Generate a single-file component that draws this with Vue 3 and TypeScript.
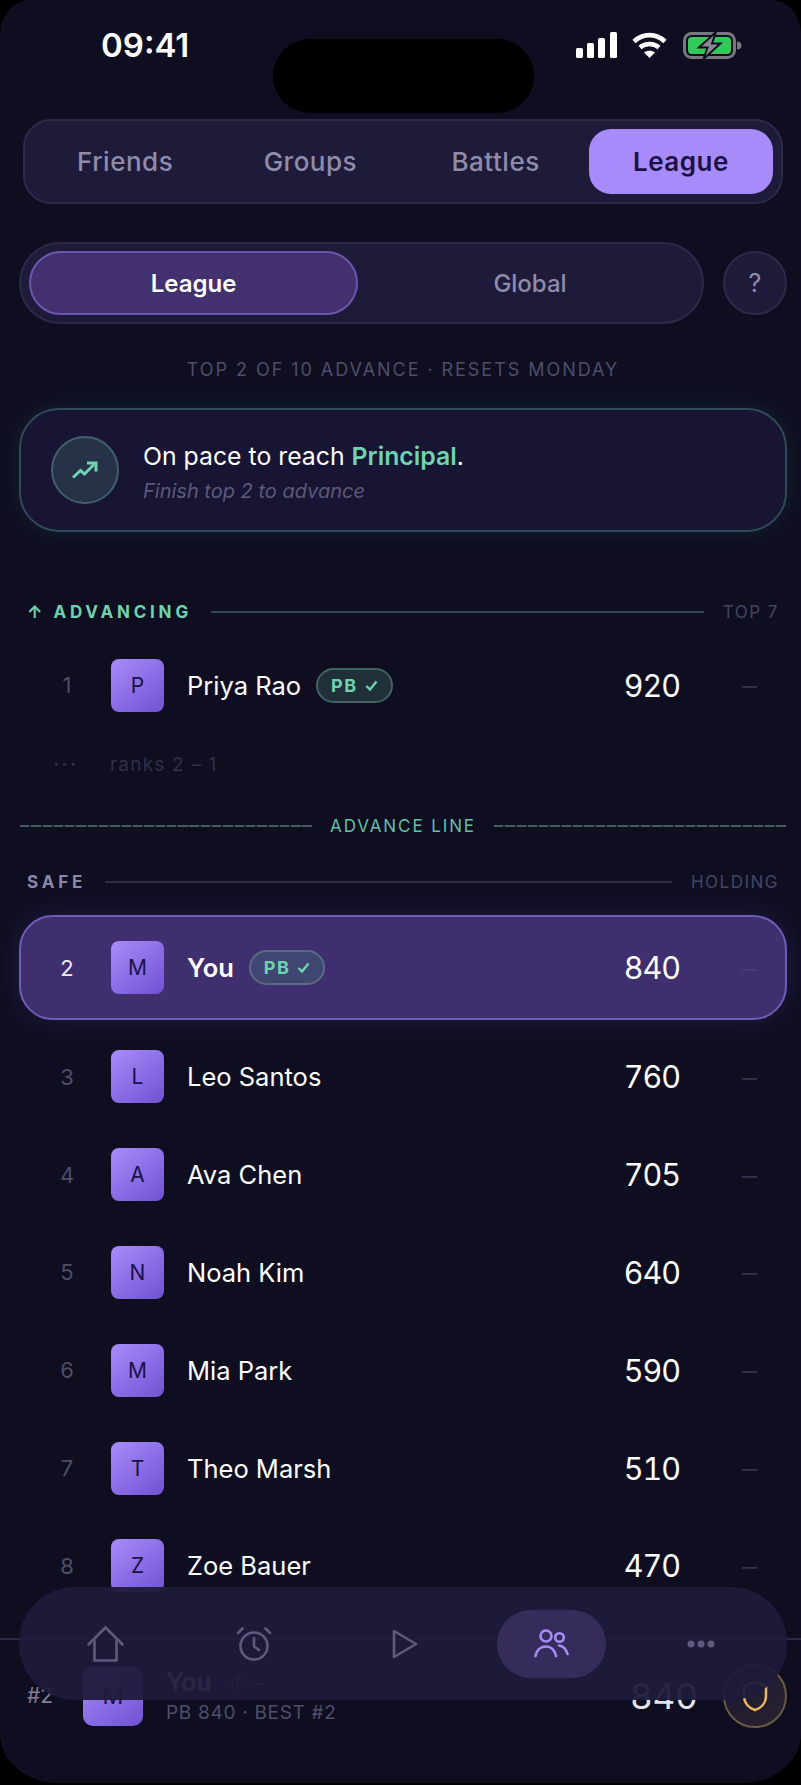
<template>
  <div class="phone">
    <div class="island"></div>

    <header class="status">
      <span class="time">09:41</span>
      <div class="status-icons">
        <svg width="41" height="26" viewBox="0 0 41 26" fill="#fff">
          <rect x="0" y="16" width="7" height="10" rx="1.5" />
          <rect x="11" y="11" width="7" height="15" rx="1.5" />
          <rect x="22" y="6" width="7" height="20" rx="1.5" />
          <rect x="34" y="0" width="7" height="26" rx="1.5" />
        </svg>
        <svg class="wifi" width="35" height="26" viewBox="0 0 35 26" fill="none" stroke="#fff" stroke-width="4.6">
          <path d="M2 9.5C11 1 24 1 33 9.5" />
          <path d="M8 15.6C13.5 10.8 21.5 10.8 27 15.6" />
          <path d="M17.5 26 L12 20.5 C15 18 20 18 23 20.5 Z" fill="#fff" stroke="none" />
        </svg>
        <svg class="battery" width="59" height="27" viewBox="0 0 59 27" fill="none">
          <rect x="1.5" y="1.5" width="50" height="24" rx="7" stroke="#77777f" stroke-width="3" />
          <rect x="5" y="5" width="43" height="17" rx="4" fill="#34c759" />
          <path d="M54 9.5c3 0 4.5 1.5 4.500 4s-1.500 4-4.500 4z" fill="#77777f" />
          <path d="M33 0 L16 15.500 H24.500 L20.500 27 L37.500 11.500 H29 Z" fill="#8a8a94" stroke="#0e0e20" stroke-width="2" />
        </svg>
      </div>
    </header>

    <nav class="tabs">
      <button v-for="t in tabs" :key="t" class="tab" :class="{ on: t === 'League' }">{{ t }}</button>
    </nav>

    <main class="content">
      <div class="seg-row">
        <div class="seg">
          <span class="seg-item on">League</span>
          <span class="seg-item global">Global</span>
        </div>
        <span class="help">?</span>
      </div>

      <p class="rule">TOP 2 OF 10 ADVANCE · RESETS MONDAY</p>

      <section class="pace">
        <span class="pace-icon">
          <svg width="26" height="18" viewBox="0 0 26 18" fill="none" stroke="#6fd3b0" stroke-width="3">
            <path d="M1 16.500 L8.500 9.500 L12.500 13 L22 3.500" />
            <path d="M15 2 H24 V10.500" />
          </svg>
        </span>
        <div>
          <div class="pace-title">On pace to reach <b>Principal</b>.</div>
          <div class="pace-sub">Finish top 2 to advance</div>
        </div>
      </section>

      <div class="section adv">
        <span class="section-name"><i>↑</i>ADVANCING</span>
        <span class="section-line"></span>
        <span class="section-note">TOP 7</span>
      </div>

      <div class="row first">
        <span class="rank">1</span>
        <span class="avatar">P</span>
        <span class="name">Priya Rao</span>
        <span class="pb">
          PB
          <svg width="13" height="11" viewBox="0 0 13 11" fill="none" stroke="#6fd3b0" stroke-width="2.400">
            <path d="M1.500 6 L5 9.500 L11.500 1.500" />
          </svg>
        </span>
        <span class="score">920</span>
        <span class="trend">–</span>
      </div>

      <div class="gap-row">
        <span class="gap-dots">···</span>
        <span class="gap-text">ranks 2 – 1</span>
      </div>

      <div class="advance-line">
        <span class="dash"></span>
        <span class="advance-text">ADVANCE LINE</span>
        <span class="dash"></span>
      </div>

      <div class="section safe">
        <span class="section-name">SAFE</span>
        <span class="section-line"></span>
        <span class="section-note">HOLDING</span>
      </div>

      <div class="row me">
        <span class="rank">2</span>
        <span class="avatar">M</span>
        <span class="name">You</span>
        <span class="pb">
          PB
          <svg width="13" height="11" viewBox="0 0 13 11" fill="none" stroke="#6fd3b0" stroke-width="2.400">
            <path d="M1.500 6 L5 9.500 L11.500 1.500" />
          </svg>
        </span>
        <span class="score">840</span>
        <span class="trend">–</span>
      </div>

      <div class="rows">
        <div v-for="r in rows" :key="r.rank" class="row">
          <span class="rank">{{ r.rank }}</span>
          <span class="avatar">{{ r.name[0] }}</span>
          <span class="name">{{ r.name }}</span>
          <span class="score">{{ r.score }}</span>
          <span class="trend">–</span>
        </div>
      </div>
    </main>

    <footer class="mine">
      <span class="mine-rank">#2</span>
      <span class="avatar big">M</span>
      <div class="mine-info">
        <div class="mine-name">You <i>↑ –</i></div>
        <div class="mine-sub">PB 840 · BEST #2</div>
      </div>
      <span class="mine-score">840</span>
      <span class="shield">
        <svg width="26" height="32" viewBox="0 0 26 32" fill="none" stroke="#e8b95c" stroke-width="2.500">
          <path d="M13 2 L24 6 V16 C24 23 19 28 13 30 C7 28 2 23 2 16 V6 Z" />
        </svg>
      </span>
    </footer>

    <nav class="dock">
      <span class="dock-item">
        <svg width="37" height="36" viewBox="0 0 37 36" fill="none" stroke="#5f5a7c" stroke-width="2.600" stroke-linejoin="round" stroke-linecap="round">
          <path d="M1.500 18.500 L18.500 1.500 L35.500 18.500" />
          <path d="M7.500 15 V34.500 H29.500 V15" />
        </svg>
      </span>
      <span class="dock-item">
        <svg width="36" height="34" viewBox="0 0 36 34" fill="none" stroke="#5f5a7c" stroke-width="2.600" stroke-linecap="round" stroke-linejoin="round">
          <circle cx="18" cy="19" r="13.500" />
          <path d="M18 11 V19.500 L23 23" />
          <path d="M2 6 L6.500 1.500" />
          <path d="M34 6 L29.500 1.500" />
        </svg>
      </span>
      <span class="dock-item play">
        <svg width="26" height="30" viewBox="0 0 26 30" fill="none" stroke="#5f5a7c" stroke-width="2.600" stroke-linejoin="round">
          <path d="M2 2 L24 15 L2 28 Z" />
        </svg>
      </span>
      <span class="dock-item on">
        <svg width="35" height="29" viewBox="0 0 35 29" fill="none" stroke="#a78bfa" stroke-width="2.600" stroke-linecap="round">
          <circle cx="12" cy="7" r="5.500" />
          <circle cx="25.500" cy="8.500" r="4.300" />
          <path d="M1.500 27 C3 20 8 17.500 12 17.500 C16 17.500 20.500 20 22 27" />
          <path d="M25 16.500 C29 17 32 20 33.500 25" />
        </svg>
      </span>
      <span class="dock-item">
        <svg width="28" height="8" viewBox="0 0 28 8" fill="#5f5a7c">
          <circle cx="4" cy="4" r="3.500" />
          <circle cx="14" cy="4" r="3.500" />
          <circle cx="24" cy="4" r="3.500" />
        </svg>
      </span>
    </nav>
  </div>
</template>

<script setup lang="ts">
const tabs = ['Friends', 'Groups', 'Battles', 'League']

const rows = [
  { rank: 3, name: 'Leo Santos', score: 760 },
  { rank: 4, name: 'Ava Chen', score: 705 },
  { rank: 5, name: 'Noah Kim', score: 640 },
  { rank: 6, name: 'Mia Park', score: 590 },
  { rank: 7, name: 'Theo Marsh', score: 510 },
  { rank: 8, name: 'Zoe Bauer', score: 470 },
]
</script>

<style>
html,
body {
  margin: 0;
  background: #000;
}
</style>

<style scoped>
.phone {
  position: relative;
  display: flex;
  flex-direction: column;
  width: 801px;
  height: 1783px;
  overflow: hidden;
  border-radius: 30px 30px 58px 58px / 34px 34px 50px 50px;
  background: #0e0e20;
  color: #fff;
  font-family: Inter, 'Liberation Sans', sans-serif;
}

.island {
  position: absolute;
  top: 39px;
  left: 273px;
  width: 261px;
  height: 74px;
  border-radius: 37px;
  background: #000;
}

.status {
  display: flex;
  justify-content: space-between;
  align-items: flex-start;
  height: 119px;
  flex: none;
  box-sizing: border-box;
  padding: 25px 59px 0 101px;
}

.time {
  font-size: 33px;
  font-weight: 600;
  line-height: 40px;
}

.status-icons {
  display: flex;
  align-items: flex-start;
  gap: 15px;
  padding-top: 7px;
}

.wifi {
  margin-right: 1px;
}

.tabs {
  display: grid;
  grid-template-columns: repeat(4, 1fr);
  gap: 1px;
  flex: none;
  height: 85px;
  box-sizing: border-box;
  margin: 0 18px 0 23px;
  padding: 8px;
  border: 2px solid #2c2949;
  border-radius: 28px;
  background: #1e1b3a;
}

.tab {
  border: 0;
  border-radius: 22px;
  background: none;
  color: #8f8cab;
  font: 500 26px Inter, 'Liberation Sans', sans-serif;
  letter-spacing: 0.5px;
}

.tab.on {
  background: #a78bfa;
  color: #1a1145;
  font-weight: 600;
}

.content {
  flex: 1;
  min-height: 0;
  padding: 0 14px 0 19px;
  overflow: hidden;
}

.seg-row {
  display: flex;
  align-items: center;
  gap: 19px;
  margin-top: 38px;
}

.seg {
  display: grid;
  grid-template-columns: 329px 1fr;
  width: 685px;
  height: 82px;
  box-sizing: border-box;
  padding: 7px 8px;
  border: 2px solid #2c2949;
  border-radius: 41px;
  background: #1e1b3a;
}

.seg-item {
  display: flex;
  align-items: center;
  justify-content: center;
  border-radius: 33px;
  color: #8f8cab;
  font-size: 24px;
  font-weight: 500;
}

.seg-item.global {
  padding-left: 8px;
}

.seg-item.on {
  border: 2px solid #6c55ae;
  background: #42306f;
  color: #fff;
  font-weight: 600;
}

.help {
  display: flex;
  align-items: center;
  justify-content: center;
  width: 64px;
  height: 64px;
  box-sizing: border-box;
  border: 2px solid #2c2949;
  border-radius: 50%;
  background: #1e1b3a;
  color: #8f8cab;
  font-size: 25px;
}

.rule {
  margin: 35px 0 0;
  color: #4f4d68;
  font-size: 18px;
  line-height: 22px;
  letter-spacing: 1.950px;
  text-align: center;
}

.pace {
  display: flex;
  align-items: center;
  gap: 24px;
  height: 124px;
  box-sizing: border-box;
  margin-top: 27px;
  padding-left: 30px;
  border: 2px solid #2e4a56;
  border-radius: 40px;
  background: #181433;
  box-shadow: 0 0 24px rgba(90, 200, 170, 0.1);
}

.pace-icon {
  display: flex;
  align-items: center;
  justify-content: center;
  width: 68px;
  height: 68px;
  box-sizing: border-box;
  border: 2px solid #40606a;
  border-radius: 50%;
  background: #263248;
}

.pace-title {
  padding-top: 4px;
  font-size: 24.8px;
  line-height: 32px;
}

.pace-title b {
  color: #6fd3b0;
  font-weight: 600;
}

.pace-sub {
  margin-top: 6px;
  color: #5c5a78;
  font-size: 20px;
  font-style: italic;
  line-height: 26px;
}

.section {
  display: flex;
  align-items: center;
  height: 22px;
  padding: 0 8px;
}

.section.adv {
  margin-top: 69px;
}

.section.safe {
  margin-top: 34px;
}

.section-name {
  color: #8a88a8;
  font-size: 17px;
  font-weight: 700;
  letter-spacing: 3.800px;
}

.adv .section-name {
  color: #6fd3b0;
}

.section-name i {
  margin-right: 11px;
  font-style: normal;
  letter-spacing: 0;
}

.section-line {
  flex: 1;
  height: 2px;
  margin: 0 19px 0 19px;
  background: #2e2d45;
}

.adv .section-line {
  background: #2f4a50;
}

.section-note {
  color: #454562;
  font-size: 17px;
  letter-spacing: 1.500px;
}

.row {
  display: flex;
  align-items: center;
  height: 98px;
  box-sizing: border-box;
  padding: 0 28px 0 16px;
  border: 2px solid transparent;
}

.rows .row {
  height: 97.8px;
}

.row.first {
  margin-top: 13px;
}

.rank {
  width: 60px;
  margin-right: 14px;
  color: #4f4d68;
  font-size: 22px;
  text-align: center;
}

.avatar {
  display: flex;
  align-items: center;
  justify-content: center;
  flex: none;
  width: 53px;
  height: 53px;
  border-radius: 8px;
  background: linear-gradient(140deg, #a88cfb, #7052d2);
  color: #1a1145;
  font-size: 21px;
}

.name {
  margin-left: 23px;
  font-size: 25.5px;
}

.pb {
  display: flex;
  align-items: center;
  gap: 7px;
  height: 35px;
  box-sizing: border-box;
  margin-left: 15px;
  padding: 0 13px;
  border: 2px solid #3f6465;
  border-radius: 18px;
  background: #1f3038;
  color: #6fd3b0;
  font-size: 18px;
  font-weight: 700;
  letter-spacing: 1.500px;
}

.score {
  margin-left: auto;
  font-size: 30.5px;
  font-variant-numeric: tabular-nums;
  letter-spacing: -1px;
}

.trend {
  width: 77px;
  color: #33324e;
  font-size: 30px;
  font-weight: 300;
  text-align: right;
}

.gap-row {
  display: flex;
  align-items: center;
  height: 24px;
  margin-top: 18px;
  color: #302f48;
  font-size: 19px;
  letter-spacing: 1.200px;
}

.gap-dots {
  width: 91px;
  padding-left: 34px;
  box-sizing: border-box;
  font-size: 22px;
  letter-spacing: 2px;
}

.advance-line {
  display: flex;
  align-items: center;
  gap: 18px;
  height: 22px;
  margin: 39px 1px 0;
}

.dash {
  flex: 1;
  height: 2px;
  background: repeating-linear-gradient(90deg, #465a62 0 9.3px, #1a2630 9.3px 11.3px);
}

.advance-text {
  color: #66bfa8;
  font-size: 17px;
  letter-spacing: 1.900px;
}

.row.me {
  height: 105px;
  margin-top: 22px;
  margin-bottom: 8px;
  border-color: #6f5bbb;
  border-radius: 34px;
  background: #3f2f6e;
  box-shadow: 0 0 28px rgba(130, 100, 230, 0.16);
}

.me .rank {
  color: #eceaf6;
}

.me .name {
  font-weight: 600;
}

.me .pb {
  border-color: #5c6b85;
  background: #3f4672;
}

.me .trend {
  color: #4a3a80;
}

.mine {
  display: flex;
  align-items: center;
  flex: none;
  height: 145px;
  box-sizing: border-box;
  padding: 0 14px 32px 27px;
  border-top: 2px solid #2d2a4a;
  background: #0f0e20;
}

.mine-rank {
  width: 56px;
  color: #807e98;
  font-size: 21px;
}

.avatar.big {
  width: 60px;
  height: 60px;
  border-radius: 10px;
  font-size: 23px;
}

.mine-info {
  margin-left: 23px;
}

.mine-name {
  font-size: 25px;
  font-weight: 600;
  line-height: 30px;
}

.mine-name i {
  margin-left: 10px;
  color: #6f6d88;
  font-size: 22px;
  font-style: normal;
  font-weight: 400;
}

.mine-sub {
  margin-top: 3px;
  color: #4f4d68;
  font-size: 19px;
  line-height: 24px;
  letter-spacing: 0.700px;
}

.mine-score {
  margin-left: auto;
  color: #e4e3ea;
  font-size: 35px;
  font-variant-numeric: tabular-nums;
}

.shield {
  display: flex;
  align-items: center;
  justify-content: center;
  width: 64px;
  height: 64px;
  box-sizing: border-box;
  margin-left: 25px;
  border: 2px solid #6b5a45;
  border-radius: 50%;
  background: linear-gradient(135deg, #1a1732, #2a2230);
}

.dock {
  position: absolute;
  top: 1587px;
  left: 19px;
  display: grid;
  grid-template-columns: repeat(5, 1fr);
  width: 768px;
  height: 113px;
  box-sizing: border-box;
  padding: 0 12px;
  border-radius: 56px;
  background: rgba(31, 27, 59, 0.95);
}

.dock-item {
  display: flex;
  align-items: center;
  justify-content: center;
  align-self: center;
  justify-self: center;
  width: 109px;
  height: 68px;
  border-radius: 34px;
}

.dock-item.play {
  padding-left: 4px;
  box-sizing: border-box;
}

.dock-item.on {
  background: #352c5c;
}
</style>
